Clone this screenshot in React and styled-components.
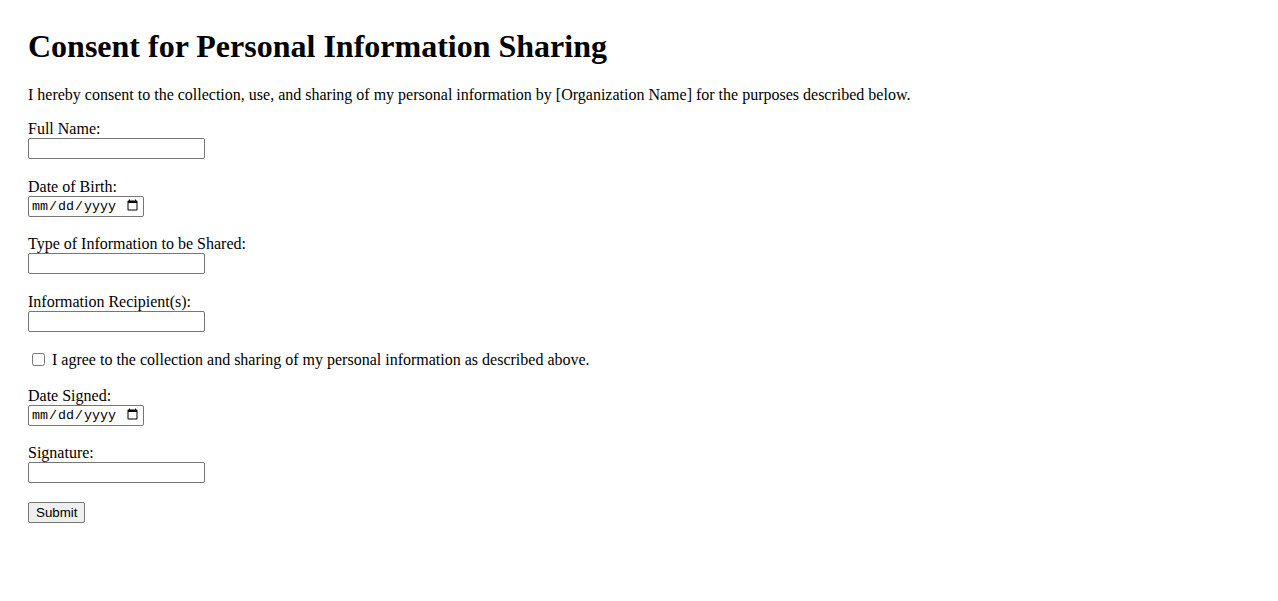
import styled, { createGlobalStyle } from "styled-components";

const GlobalStyle = createGlobalStyle`
  body {
    margin: 0;
    background: #ffffff;
    color: #000000;
    font-family: "Liberation Serif", "Times New Roman", serif;
    font-size: 16px;
  }
`;

const Page = styled.div`
  padding: 28px;
`;

const Title = styled.h1`
  margin: 0 0 21px;
  font-size: 32px;
  font-weight: bold;
  line-height: 37px;
`;

const Intro = styled.p`
  margin: 0 0 16px;
  line-height: 18px;
`;

const Form = styled.form`
  display: flex;
  flex-direction: column;
  align-items: flex-start;
`;

const Field = styled.div`
  display: flex;
  flex-direction: column;
  align-items: flex-start;
  margin-bottom: 18.5px;
`;

const Label = styled.label`
  line-height: 18px;
`;

const TextInput = styled.input`
  box-sizing: border-box;
  width: 177px;
  height: 21px;
  margin: 0;
  padding: 1px 2px;
  border: 1px solid #767676;
  border-radius: 2px;
  font-family: "Liberation Sans", Arial, sans-serif;
  font-size: 13.33px;
`;

const DateInput = styled.input`
  box-sizing: border-box;
  width: 116px;
  height: 21px;
  margin: 0;
  padding: 1px 2px;
  border: 1px solid #767676;
  border-radius: 2px;
  font-family: "Liberation Mono", monospace;
  font-size: 13.33px;
`;

const CheckRow = styled.div`
  display: flex;
  align-items: center;
  line-height: 18px;
  margin-bottom: 17.5px;
`;

const Checkbox = styled.input`
  width: 13px;
  height: 13px;
  margin: 3px 7px 3px 4px;
`;

const SubmitButton = styled.button`
  height: 21px;
  padding: 1px 7px;
  border: 1px solid #767676;
  border-radius: 2px;
  background: #efefef;
  font-family: "Liberation Sans", Arial, sans-serif;
  font-size: 13.33px;
  color: #000000;
`;

const fields = [
  { id: "name", label: "Full Name:", type: "text" },
  { id: "dob", label: "Date of Birth:", type: "date" },
  { id: "info", label: "Type of Information to be Shared:", type: "text" },
  { id: "recipients", label: "Information Recipient(s):", type: "text" },
];

const FieldBlock = ({ id, label, type }) => (
  <Field>
    <Label htmlFor={id}>{label}</Label>
    {type === "date" ? (
      <DateInput id={id} type="date" />
    ) : (
      <TextInput id={id} type="text" />
    )}
  </Field>
);

export default function App() {
  return (
    <>
      <GlobalStyle />
      <Page>
        <Title>Consent for Personal Information Sharing</Title>
        <Intro>
          I hereby consent to the collection, use, and sharing of my personal
          information by [Organization Name] for the purposes described below.
        </Intro>
        <Form onSubmit={(e) => e.preventDefault()}>
          {fields.map((f) => (
            <FieldBlock key={f.id} {...f} />
          ))}
          <CheckRow>
            <Checkbox type="checkbox" id="agree" />
            <Label htmlFor="agree">
              I agree to the collection and sharing of my personal information
              as described above.
            </Label>
          </CheckRow>
          <FieldBlock id="signed" label="Date Signed:" type="date" />
          <FieldBlock id="signature" label="Signature:" type="text" />
          <SubmitButton type="submit">Submit</SubmitButton>
        </Form>
      </Page>
    </>
  );
}
